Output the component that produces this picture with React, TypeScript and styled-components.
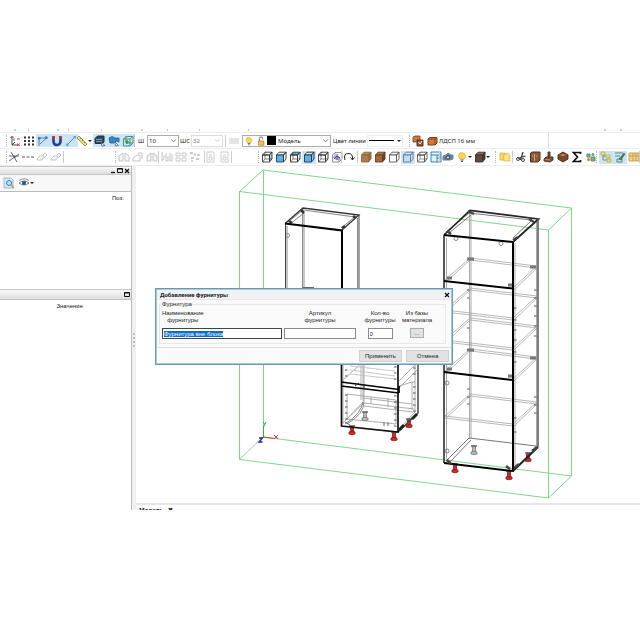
import React, { useEffect, useRef } from 'react';
import styled, { createGlobalStyle, css } from 'styled-components';

const Global = createGlobalStyle`
  * { box-sizing: border-box; }
  body { margin: 0; background: #fff; }
  body, button, input, select { font-family: "Liberation Sans", Roboto, sans-serif; font-size: 6px; line-height: 8px; color: #222; }
  button, input, select { margin: 0; padding: 0; }
  h2, p { margin: 0; }
`;

const Screen = styled.div`
  min-height: 100vh;
  display: grid;
  grid-template-rows: 129px 1fr 130px;
`;
const Workspace = styled.main`
  grid-row: 2;
  position: relative;
  min-width: 0;
  display: grid;
  grid-template-rows: 4px 16px 17px 1fr;
  overflow: hidden;
`;
const MenuEdge = styled.div`
  border-bottom: 1px solid #ececec;
  overflow: hidden;
  svg { display: block; width: 640px; height: 2px; }
`;
const Toolbar = styled.div`
  display: flex;
  align-items: center;
  min-width: 0;
  overflow: hidden;
  border-bottom: 1px solid #ededed;
`;
const Group = styled.div<{ $width: number; $left?: number }>`
  flex: none;
  width: ${p => p.$width}px;
  margin-left: ${p => p.$left ?? 0}px;
  display: flex;
  align-items: center;
  justify-content: space-between;
`;
const ToolButton = styled.button<{ $on?: boolean; $wide?: boolean }>`
  flex: none;
  width: ${p => (p.$wide ? 17 : 14)}px;
  height: 13px;
  border: 0;
  display: flex;
  align-items: center;
  justify-content: center;
  background: ${p => (p.$on ? '#cce4f7' : 'transparent')};
`;
const Glyph = styled.svg`
  flex: none;
  display: block;
  width: 12px;
  height: 12px;
  fill: none;
  stroke: #333;
`;
const Caret = styled.span`
  border: 2px solid transparent;
  border-top-color: #222;
  border-bottom: 0;
`;
const Divider = styled.span<{ $dotted?: boolean; $left?: number }>`
  flex: none;
  height: 12px;
  margin-left: ${p => p.$left ?? 0}px;
  border-left: 1px ${p => (p.$dotted ? 'dotted #bbb' : 'solid #ccc')};
`;
const FieldLabel = styled.label<{ $width: number; $left: number }>`
  flex: none;
  width: ${p => p.$width}px;
  margin-left: ${p => p.$left}px;
  font-family: "Noto Sans", sans-serif;
  white-space: nowrap;
`;
const LineLabel = styled.span`
  flex: none;
  width: 34px;
  margin-left: 2px;
  font-family: Roboto, sans-serif;
  white-space: nowrap;
`;
const Choice = styled.div<{ $width: number; $left: number; $faded?: boolean }>`
  flex: none;
  width: ${p => p.$width}px;
  height: 12px;
  margin-left: ${p => p.$left}px;
  display: flex;
  align-items: center;
  border: 1px solid ${p => (p.$faded ? '#ddd' : '#aaa')};
  color: ${p => (p.$faded ? '#777' : '#222')};
  select {
    flex: 1;
    min-width: 0;
    height: 100%;
    appearance: none;
    border: 0;
    padding-left: 1px;
    background: transparent;
    color: inherit;
    font-family: "Noto Sans", sans-serif;
  }
  > svg { height: 10px; }
  > svg:last-child { width: 7px; height: 7px; margin-right: 1px; }
`;
const Swatch = styled.span`
  width: 9px;
  height: 9px;
  margin-right: 1px;
  background: #000;
`;
const LineStyle = styled.button`
  flex: none;
  width: 36px;
  height: 12px;
  padding: 0 1px;
  display: flex;
  align-items: center;
  justify-content: space-between;
  border: 1px solid #eee;
  background: #fff;
  &::before { content: ""; width: 25px; border-top: 1px solid #000; }
`;
const Material = styled.span`
  margin-left: 1px;
  padding-right: 73px;
  border-right: 1px solid #e0e0e0;
  font-family: "Noto Sans", sans-serif;
  line-height: 16px;
  white-space: nowrap;
`;

const Body = styled.div`
  display: grid;
  grid-template-columns: 132px 4px minmax(0, 1fr);
  min-height: 0;
`;
const Side = styled.aside`
  display: grid;
  grid-template-rows: 9px 17px 97px 11px 1fr;
  min-height: 0;
  border-right: 1px solid #bbb;
`;
const PaneBar = styled.div`
  display: flex;
  justify-content: flex-end;
  align-items: center;
  gap: 1px;
  padding-right: 1px;
  border: solid #c5c5c5;
  border-width: 1px 0;
  background: linear-gradient(#f8f8f8, #dddddd);
`;
const WindowButton = styled.button`
  width: 6px;
  height: 7px;
  border: 0;
  background: transparent;
  svg { width: 6px; height: 7px; stroke: #111; }
`;
const PaneTools = styled.div`
  display: flex;
  align-items: center;
  gap: 1px;
  padding-left: 2px;
  background: #f8f8f8;
  border-bottom: 1px solid #bbb;
`;
const PaneHead = styled.div<{ $right: number }>`
  padding: 2px ${p => p.$right}px 0 0;
  text-align: right;
`;
const Splitter = styled.div`
  background: #f0f0f0;
  display: flex;
  justify-content: center;
  align-items: flex-start;
  padding-top: 167px;
  &::before { content: ""; height: 14px; border-left: 2px dotted #bbb; }
`;
const View = styled.section`
  display: flex;
  flex-direction: column;
  min-width: 0;
  min-height: 0;
`;
const Scene = styled.svg`
  flex: 1;
  min-height: 0;
  width: 100%;
  display: block;
  fill: none;
`;
const TabStrip = styled.div`
  flex: none;
  height: 7px;
  border-top: 2px solid #e6e6e6;
  padding: 1px 0 0 3px;
  overflow: hidden;
  font-weight: 700;
  font-family: "Noto Sans", sans-serif;
  display: flex;
  gap: 5px;
`;

const Dialog = styled.form`
  position: absolute;
  left: 155px;
  top: 159px;
  width: 298px;
  height: 77px;
  display: grid;
  grid-template-rows: 11px 1fr 17px;
  border: 1px solid #6b99b1;
  outline: 1px solid #a9c9d8;
  outline-offset: -2px;
  background: #fafafa;
`;
const DialogTitle = styled.header`
  display: flex;
  justify-content: space-between;
  align-items: center;
  padding: 1px 2px 0 4px;
  background: #f0f2f5;
  border-bottom: 1px solid #e3e5e8;
  h2 { font: 700 6px/8px Roboto, sans-serif; }
`;
const Fields = styled.fieldset`
  min-width: 0;
  margin: 0 6px 3px 3px;
  padding: 0 0 0 2px;
  border: 1px solid #e8e8e8;
  display: grid;
  grid-template-columns: 120px 72px 44px 26px;
  column-gap: 2px;
  align-content: start;
  legend { padding: 0 1px; margin-left: -1px; }
`;
const fieldText = css`
  line-height: 7px;
  white-space: pre;
  text-align: center;
`;
const Field = styled.div<{ $start?: boolean }>`
  min-width: 0;
  display: flex;
  flex-direction: column;
  align-items: ${p => (p.$start ? 'flex-start' : 'center')};
  gap: 4px;
  padding-top: 2px;
  label { ${fieldText} }
`;
const TextBox = styled.input<{ $short?: boolean; $dark?: boolean }>`
  width: ${p => (p.$short ? '25px' : '100%')};
  height: 11px;
  border: 1px solid ${p => (p.$dark ? '#444' : '#8a8a8a')};
  padding: 0 1px;
  background: #fff;
  outline: none;
  caret-color: transparent;
  &::selection { background: #0a6fc8; color: #fff; }
`;
const PushButton = styled.button<{ $small?: boolean }>`
  width: ${p => (p.$small ? 14 : 43)}px;
  height: ${p => (p.$small ? 10 : 12)}px;
  border: 1px solid ${p => (p.$small ? '#aaa' : '#d0d0d0')};
  background: #e2e2e2;
`;
const Actions = styled.footer`
  display: flex;
  justify-content: flex-end;
  align-items: center;
  gap: 4px;
  padding-right: 3px;
  border-top: 1px solid #ddd;
`;

type IconProps = { children: React.ReactNode };
const Icon = ({ children }: IconProps) => <Glyph viewBox="0 0 12 12" aria-hidden="true">{children}</Glyph>;

const Cube = ({ front = 'none', top = 'none', side = 'none', back = false, stroke = '#333' }) => (
  <Icon>
    <g stroke={stroke} strokeWidth="0.9" strokeLinejoin="round">
      <path d="M1.5 4 4 1.2H11L8.500 4Z" fill={top} />
      <path d="M8.500 4 11 1.2V8L8.500 11Z" fill={side} />
      <path d="M1.500 4H8.500V11H1.500Z" fill={front} />
      {back && <path d="M4 1.200V8H11M4 8 1.500 11" strokeWidth=".6" />}
    </g>
  </Icon>
);

const Axes = () => <Icon><path d="M3 2V10H9M3 10 6 7" stroke="#444" /><path d="M1.500 3 3 1 4.500 3M8 4H11M8 8.500 11 11M11 8.500 8 11" stroke="#c44" /><path d="M5 3V6" stroke="#3a5" /></Icon>;
const GridDots = () => <Icon><path d="M1 2.500H11M1 6H11M1 9.500H11" stroke="#333" strokeWidth="2" strokeDasharray="2 2" /></Icon>;
const Polyline = () => <Icon><path d="M2 11V3H9.500L3 9" stroke="#5b83a8" /><path d="M1 2H3.500V4.500H1ZM8 1.500H10.500V4H8Z" fill="#417da8" stroke="none" /></Icon>;
const Magnet = () => <Icon><path d="M2.500 1.500V6Q2.500 10 6 10T9.500 6V1.500" stroke="#293b90" strokeWidth="2.600" /><path d="M2.500 1V4M9.500 1V4" stroke="#c33338" strokeWidth="2.600" /></Icon>;
const Segment = () => <Icon><path d="M2 10 10 2" stroke="#4f86c3" /><path d="M1 8.500H3.500V11H1ZM8.500 1H11V3.500H8.500Z" fill="#63a4e8" stroke="none" /></Icon>;
const Ruler = () => <Icon><path d="M1 3 3 1 11 9 9 11Z" fill="#eadf75" stroke="#89803a" strokeWidth=".8" /><path d="M4 4 5 3M6 6 7 5M8 8 9 7" stroke="#766e2d" strokeWidth=".7" /></Icon>;
const Layers = () => <Icon><path d="M1 3.500 3.500 1H10V7L8 8.500H1Z" fill="#31485a" stroke="#1f303d" /><path d="M2 4.500H8M2 6.500H8" stroke="#8ab4d0" strokeWidth=".8" /><path d="M7 7 11 10.500 8 11Z" fill="#fff" stroke="#345" strokeWidth=".7" /></Icon>;
const Camera = () => <Icon><path d="M1 3 4 1.500 7 3H11V7L8 6 6 8H2Z" fill="#3489c9" stroke="#225f8d" strokeWidth=".8" /><path d="M7 7 10.500 10.500 7.500 11Z" fill="#fff" stroke="#456" strokeWidth=".7" /></Icon>;
const GreenFrame = () => <Icon><path d="M1.500 4 4 1.500H11V8L8 11H1.500ZM1.500 4H8V11M8 4 11 1.500M4 1.500V8H11" stroke="#3a8f66" strokeWidth=".9" /><path d="M5 5V9M3.500 7H7" stroke="#257b42" /></Icon>;
const Bulb = () => <Icon><path d="M4 8Q1.500 5.500 3 3T8 2.500T8 8Z" fill="#ffd750" stroke="#d8a92f" strokeWidth=".7" /><path d="M4.500 9H7.500M5 10.500H7" stroke="#555" /></Icon>;
const Lock = () => <Icon><path d="M4 6V3Q4 1 6 1T8 3V4" stroke="#555" /><path d="M3 6H9.500V11H3Z" fill="#f5c44a" stroke="#9d7727" strokeWidth=".8" /></Icon>;
const Chevron = ({ faded = false }) => <Icon><path d="M2 4 6 8 10 4" stroke={faded ? '#bbb' : '#555'} strokeWidth="1.300" /></Icon>;
const Star = () => <Icon><path d="M1 10 11 3M3 1 9 11M1 5H11" stroke="#444" strokeWidth=".8" /><path d="M5.500 5H7.500V7H5.500Z" fill="#416da0" stroke="none" /></Icon>;
const Dash = () => <Icon><path d="M0 6H12" stroke="#555" strokeDasharray="3 1.500" /></Icon>;
const Eraser = () => <Icon><path d="M1 8 4 5H8L6 9H1ZM7 4 9 2 11 4 8 7" stroke="#bcbcbc" strokeWidth=".9" /></Icon>;
const Mirror = () => <Icon><path d="M1 10V5L5 2V10ZM7 10V2L11 5V10Z" stroke="#c0c0c0" fill="#f5f5f5" strokeWidth=".9" /></Icon>;
const Sheet = () => <Icon><path d="M1 10V7L5 4H8V10ZM6 2H10V8" stroke="#bcbcbc" strokeWidth=".9" /></Icon>;
const Tiles = () => <Icon><path d="M1 2H5V5H1ZM7 2H11V5H7ZM1 7H5V10H1ZM7 7H11V10H7Z" stroke="#c2c2c2" strokeWidth=".9" /></Icon>;
const Scatter = () => <Icon><path d="M1 2H4M6 2V5M8 4H11M2 7H5M7 8H10M3 9V11" stroke="#bbb" strokeWidth="1.300" /></Icon>;
const Bars = () => <Icon><path d="M1 1V10L3 8V4M5 2V10H7V5M9 2V10H11V3" stroke="#bdbdbd" strokeWidth=".9" /></Icon>;
const Page = () => <Icon><path d="M2 1H9V11H2ZM4 4H7M4 6H7V9H4Z" stroke="#c7c7c7" strokeWidth=".9" /></Icon>;
const Rotate = () => <Icon><path d="M2 9Q0 2 6 2.500 10 3 9.500 8M7.500 6.500 9.500 9 11.500 6.500" stroke="#222" /></Icon>;
const Globe = () => <Icon><path d="M1.500 4 4 1.500H11V8L8 11H1.500ZM4 1.500V8H11M1.500 6H8V11" stroke="#777" strokeWidth=".8" /><path d="M3 8 6 5 9 7M6 3V9" stroke="#5b34c7" /></Icon>;
const Panels = () => <Icon><path d="M1 1H11V11H1ZM1 4H11M7 4V11M7 7H11" stroke="#3983bb" fill="#e1f3ff" /></Icon>;
const Photo = () => <Icon><path d="M1 9V5L4 4 6 2 9 4H11V8L8 9Z" fill="#718096" stroke="#7284a0" /><circle cx="6" cy="6.500" r="1.700" fill="#c6dced" stroke="#2b3a50" /></Icon>;
const Notes = () => <Icon><path d="M1 2H6V9H1Z" fill="#ffd95e" stroke="#c49d38" strokeWidth=".6" /><path d="M4 4 9 2 11 5V10H5Z" fill="#ffe478" stroke="#cfaa42" strokeWidth=".6" /></Icon>;
const Scissors = () => <Icon><path d="M8 1 5.500 9M10.500 5 3 7.500" stroke="#333" strokeWidth="1.200" /><circle cx="3" cy="8" r="1.500" stroke="#444" /><circle cx="8" cy="9" r="1.500" stroke="#444" /></Icon>;
const Cabinet = () => <Icon><path d="M1.500 2 3.500 1H11V9L9 11H1.500Z" fill="#8b5a3b" stroke="#4d3225" /><path d="M5.500 3V10M3 5H4M7 5H8" stroke="#d4a56e" /></Icon>;
const Drill = () => <Icon><path d="M5 1H7V6H5ZM1 8 3 6H10V9L7 11 1 10Z" fill="#79523d" stroke="#4d3931" /><path d="M2 8.500 7 9" stroke="#d3866d" /></Icon>;
const Crate = () => <Icon><path d="M1 4 6 1 11 4V8L6 11 1 8Z" fill="#7b4a2e" stroke="#4e2d1c" /><path d="M2 4 6 3 9 4 6 5Z" fill="#d19252" stroke="none" /></Icon>;
const Sigma = () => <Icon><path d="M9.500 3V1.500H2.500L6.500 6 2.500 10.500H9.500V9" stroke="#111" strokeWidth="1.700" /></Icon>;
const Money = () => <Icon><path d="M2 3H5V6H2ZM6 6H10V10H6Z" fill="#7eb46d" stroke="#668d64" /><circle cx="8" cy="3.500" r="1.500" fill="#5b9bd0" stroke="none" /><circle cx="3.500" cy="8.500" r="1.500" fill="#d27c45" stroke="none" /></Icon>;
const Tree = () => <Icon><path d="M3 4V9H8M3 5H6" stroke="#7c8c73" /><path d="M1 1H5V4H1ZM6 4H10V7H6ZM7 8H11V11H7Z" fill="#efdb69" stroke="#aaa04c" strokeWidth=".6" /></Icon>;
const Edit = () => <Icon><path d="M1 2H9M1 5H6M3 8H8V11H3Z" stroke="#568769" /><path d="M5 8 10 2 11 3 7 9Z" fill="#477f4f" stroke="#326a39" strokeWidth=".6" /></Icon>;
const Table = () => <Icon><path d="M1 2H11V10H1ZM1 5H11M5 2V10M8 2V10" fill="#f5d681" stroke="#bf9b50" strokeWidth=".9" /></Icon>;
const Search = () => <Icon><path d="M1 1H8L10 3V11H1Z" fill="#d9ecfa" stroke="#79a1bd" strokeWidth=".7" /><circle cx="6" cy="6" r="2.500" fill="#bfe2f5" stroke="#3d7ba8" /><path d="M8 8 11 11" stroke="#c09648" strokeWidth="1.300" /></Icon>;
const Eye = () => <Icon><path d="M1 6Q6 2 11 6 6 10 1 6Z" fill="#e8eef2" stroke="#71818b" /><circle cx="6" cy="6" r="2" fill="#2e5875" stroke="none" /><path d="M1 3.500Q6 0 11 3.500" stroke="#8194a0" /></Icon>;
const Boxes = () => <Icon><path d="M1 2 3 1H8V7H1Z" fill="#d47936" stroke="#6c3e24" strokeWidth=".8" /><path d="M5 5H11V11H5Z" fill="#99532f" stroke="#53321f" /><path d="M6.500 7 8 9 10 6" stroke="#eee" /></Icon>;
const Slab = () => <Icon><path d="M2 4 4 2.500H11V8L9 10H2Z" fill="#d77831" stroke="#724020" /><path d="M2 4H9V10M9 4 11 2.500" stroke="#724020" strokeWidth=".7" /></Icon>;
const Lines = () => <Icon><path d="M1 4H11M1 6H11M1 8H11" stroke="#ccc" /></Icon>;
const Cross = () => <Glyph viewBox="0 0 6 6"><path d="M1 1.500 5 5.500M5 1.500 1 5.500" strokeWidth="1.300" /></Glyph>;
const Maximize = () => <Glyph viewBox="0 0 6 7"><path d="M.5 1.500H5.500V5.500H.5ZM.5 2H5.500" /></Glyph>;

type Tool = { label: string; icon: React.ReactNode; on?: boolean; caret?: boolean };
const tool = (label: string, icon: React.ReactNode, on = false, caret = false): Tool => ({ label, icon, on, caret });
const Tools = ({ items, width, left }: { items: Tool[]; width: number; left?: number }) => (
  <Group $width={width} $left={left}>
    {items.map(t => (
      <ToolButton key={t.label} type="button" aria-label={t.label} $on={t.on} $wide={t.caret}>
        {t.icon}{t.caret && <Caret />}
      </ToolButton>
    ))}
  </Group>
);

const BLUE = '#54b4ef';
const snapTools = [tool('Оси', <Axes />), tool('Сетка', <GridDots />), tool('Ломаная', <Polyline />, true), tool('Привязка', <Magnet />, true), tool('Отрезок', <Segment />, true)];
const modeTools = [tool('Слои', <Layers />, true), tool('Камера', <Camera />, true), tool('Каркас', <GreenFrame />, true)];
const viewTools = [
  tool('Слева', <Cube side="#9dd3f5" back />), tool('Спереди', <Cube front={BLUE} />), tool('Сверху', <Cube top={BLUE} back />),
  tool('Вид', <Cube front={BLUE} side="#80c9f3" />, true), tool('Снизу', <Cube back />), tool('Орбита', <Globe />),
];
const shadeTools = [
  tool('Текстура', <Cube front="#ad7c48" top="#b98a54" side="#9a6d3d" stroke="#8b6440" />),
  tool('Материал', <Cube front="#a6663a" top="#b77b4d" side="#6c4229" stroke="#60402b" />),
  tool('Без граней', <Cube front="#fff" stroke="#555" />),
  tool('С гранями', <Cube front="#c5dcef" top="#d9eafa" stroke="#567b9d" />, true),
  tool('Проволочный', <Cube back stroke="#555" />), tool('Панели', <Panels />),
];
const modelTools = [tool('Вырезать', <Scissors />), tool('Шкаф', <Cabinet />), tool('Крепёж', <Drill />), tool('Ящик', <Crate />), tool('Сумма', <Sigma />), tool('Стоимость', <Money />)];

const Leg = ({ x, y, color = '#c92d2d', line = '#8a1515' }: { x: number; y: number; color?: string; line?: string }) => (
  <g stroke={line} strokeWidth=".8" fill={color}>
    <path d={`M${x - 1.5} ${y - 6}h3v6h-3z`} />
    <path d={`M${x - 3} ${y}q3-1.500 6 0v2q-3 1.500-6 0z`} />
    <path d={`M${x - 3} ${y - 6}h6`} stroke="#666" strokeWidth="1.500" />
  </g>
);
const Shelf = ({ y, open = false }: { y: number; open?: boolean }) => (
  <g stroke="#999" strokeWidth=".7">
    <path d={`M445 ${y}L470 ${y - 22}L537 ${y - 14}L513 ${y + 8}M446 ${y + 2}L470 ${y - 20}L537 ${y - 12}L514 ${y + 10}`} />
    {!open && <path d={`M445 ${y}L513 ${y + 8}M445 ${y + 2}L513 ${y + 10}`} />}
    {open && <path d={`M467 ${y - 21}h7M530 ${y - 13}h6M447 ${y - 2}h5M508 ${y + 5}h4`} stroke="#777" strokeWidth="3" />}
  </g>
);
const Pegs = ({ x, rows }: { x: number; rows: number[] }) => (
  <path d={rows.map(y => `M${x} ${y}h2.500`).join('')} stroke="#555" />
);

const Model = () => (
  <Scene viewBox="136 166 504 337" preserveAspectRatio="xMinYMin meet" role="img" aria-label="Модель">
    <g stroke="#82d68c" strokeWidth="1">
      <path d="M263.500 170V437M239.500 191V459.500M548.500 230V498M571.500 208V476" />
      <path d="M263 170 571.500 208M239.500 191.500 548.500 230M239.500 459.500 548.500 498M263 437 571.500 476M239.500 191.500 263 170M548.500 230 571.500 208M548.500 498 571.500 476" />
      <path d="M239.500 459.500 263 437" stroke="#a8c9aa" />
    </g>
    <g strokeWidth="1">
      <path d="M263.500 437V426M263.500 427 266 422M264.500 424 263 422" stroke="#39a84a" />
      <path d="M263 437 274 438.500M274 435 278 439M278 435 274 439" stroke="#d33f36" />
      <path d="M259 438H262.500L259 442H262.500" stroke="#192a9b" strokeWidth="1.300" />
    </g>

    <g stroke="#8c8c8c" strokeWidth="1">
      <path d="M302.500 209V290M304 212V290M287 226V290M357.500 218V290" />
      <path d="M303 287.500H314" stroke="#666" />
      <circle cx="287.500" cy="235.500" r="2" />
    </g>
    <path d="M288 222 303 210 355 217 341 228M290 224 304 213" stroke="#888" />
    <path d="M285.500 224V290M359 215V290" stroke="#444" />
    <path d="M285 223.500 303 208 359 215 342 230" stroke="#333" strokeWidth="1.300" />
    <path d="M285 223.500 342 230.500V290" stroke="#000" strokeWidth="2" />
    <path d="M289 221 292 223M301 210 304 213M353 216 356 218M342 228 345 226" stroke="#333" strokeWidth="2.500" />

    <g stroke="#999" strokeWidth=".8">
      <path d="M363 360V402L343 423M361 364V400M364 365V402M343 380 365 360M399 381 417 363M399 388 417 370" />
      <path d="M347 394 396 400V424L347 419ZM364 403 414 409M364 406 413 412M347 419 364 403M399 429 416 411M363 398 412 404" />
      <path d="M343 362V424M415 360V412M412 382V410M399 386 412 382H415M371 397V404M388 398V407" />
      <path d="M350 366 395 371M350 370 395 376M350 374 395 379" stroke="#bbb" />
    </g>
    <path d="M345 424Q361 414 363 402M347 424Q364 414 364 402" stroke="#888" />
    <Leg x={365} y={418} color="#bbb" line="#777" />
    <Leg x={352} y={432} /><Leg x={394} y={438} /><Leg x={409} y={425} />
    <path d="M418 360V413L398 432" stroke="#444" strokeWidth="1.500" />
    <path d="M341.500 360V426L398 432V360" stroke="#111" strokeWidth="1.700" />
    <path d="M341 382 399 389.500M341 386 399 393M399 386V393" stroke="#000" strokeWidth="1.700" />
    <path d="M355 386 359 383M364 384V389" stroke="#333" />
    <Pegs x={345} rows={[370, 376, 395, 401, 407, 413, 419]} />
    <Pegs x={394} rows={[367, 373, 379, 396, 402, 408, 414, 420, 426]} />
    <Pegs x={413} rows={[368, 374, 387, 393, 399, 405, 411]} />
    <path d="M399 430 404 425M412 419 417 414" stroke="#222" strokeWidth="3" />
    <path d="M384 422V426M388 422V426M345 422 350 425" stroke="#666" />

    <path d="M469.500 212V439M471 214V439M446.500 238V461M536.500 222V447M515 243V468" stroke="#aaa" />
    <Shelf y={280} open /><Shelf y={310} /><Shelf y={340} /><Shelf y={371} open /><Shelf y={416} />
    <path d="M446 461 469 438 536 446M450 462 471 440" stroke="#777" />
    <path d="M446 232 469 213 532 220 513 238M449 233 471 215" stroke="#777" />
    <g stroke="#888">
      <circle cx="456" cy="238.500" r="2" /><circle cx="501" cy="243.500" r="2" />
      <circle cx="447" cy="383" r="2" /><circle cx="447" cy="451" r="2" />
    </g>
    <Pegs x={514} rows={[308, 320, 330, 340, 352, 362, 418, 432]} />
    <Pegs x={534} rows={[290, 298, 306, 316, 326, 336, 397, 405, 413]} />
    <Pegs x={467} rows={[290, 298, 328, 389, 397, 404]} />
    <Leg x={474} y={452} color="#bbb" line="#777" />
    <Leg x={455} y={470} /><Leg x={509} y={477} /><Leg x={528} y={459} />
    <path d="M444 235 470 210.500 538.500 219 513 242" stroke="#222" strokeWidth="1.700" />
    <path d="M538 219V447" stroke="#555" strokeWidth="1.500" />
    <path d="M444 235V463" stroke="#222" strokeWidth="1.500" />
    <path d="M444 235 513 242M444 281 513 288.500M444 372 513 380M444 463 513 471V242" stroke="#000" strokeWidth="2" />
    <path d="M513 471 538 447" stroke="#222" strokeWidth="2" />
    <path d="M447 231 451 234M468 211 474 214M529 219 534 222M513 240 518 237M514 468 519 464M532 451 537 447M447 460 451 464M506 466 510 469" stroke="#444" strokeWidth="2.500" />
  </Scene>
);

export default function App() {
  const nameRef = useRef<HTMLInputElement>(null);
  useEffect(() => {
    nameRef.current?.focus();
    nameRef.current?.select();
  }, []);
  return (
    <>
      <Global />
      <Screen>
        <Workspace>
          <MenuEdge>
            <svg viewBox="0 0 640 2" aria-hidden="true">
              <path d="M14 1h2M28 1h1M57 1h2M68 1h1M101 1h1M141 1h2M167 1h1M199 1h1M248 1h1M604 1h2M620 1h2" stroke="#999" />
            </svg>
          </MenuEdge>
          <Toolbar role="toolbar" aria-label="Привязки и слои">
            <Divider $dotted $left={6} />
            <Tools items={snapTools} width={66} left={1} />
            <Tools items={[tool('Линейка', <Ruler />, false, true)]} width={17} left={1} />
            <Tools items={modeTools} width={41} left={1} />
            <Divider $dotted />
            <FieldLabel htmlFor="w" $width={8} $left={3}>Ш</FieldLabel>
            <Choice $width={32} $left={1}><select id="w"><option>10</option></select><Chevron /></Choice>
            <FieldLabel htmlFor="ws" $width={11} $left={1}>ШС</FieldLabel>
            <Choice $width={32} $left={0} $faded><select id="ws"><option>32</option></select><Chevron faded /></Choice>
            <Divider $left={2} />
            <Tools items={[tool('Слой', <Lines />)]} width={14} left={1} />
            <Choice $width={89} $left={1}>
              <Bulb /><Lock /><Swatch />
              <select aria-label="Слой модели"><option>Модель</option></select><Chevron />
            </Choice>
            <LineLabel>Цвет линии</LineLabel>
            <LineStyle type="button" aria-label="Цвет линии"><Caret /></LineStyle>
            <Divider $dotted $left={6} />
            <Tools items={[tool('Материалы', <Boxes />), tool('Плита', <Slab />)]} width={27} left={1} />
            <Material>ЛДСП 16 мм</Material>
          </Toolbar>
          <Toolbar role="toolbar" aria-label="Виды и модель">
            <Divider $dotted $left={6} />
            <Tools items={[tool('Точка', <Star />), tool('Штрих', <Dash />), tool('Ластик', <Eraser />), tool('Стереть', <Eraser />)]} width={56} left={0} />
            <Divider />
            <Divider $dotted $left={51} />
            <Tools items={[tool('Зеркало', <Mirror />), tool('Лист', <Sheet />), tool('Копия', <Mirror />)]} width={41} left={1} />
            <Divider />
            <Tools items={[tool('Ряд', <Bars />), tool('Массив', <Tiles />), tool('Россыпь', <Scatter />)]} width={41} left={1} />
            <Divider $left={3} />
            <Tools items={[tool('Страница', <Page />), tool('Документ', <Page />)]} width={27} left={-1} />
            <Divider />
            <Divider $dotted $left={26} />
            <Tools items={viewTools} width={80} left={1} />
            <Divider $left={1} />
            <Tools items={[tool('Повернуть', <Rotate />)]} width={14} left={0} />
            <Divider $left={1} />
            <Tools items={shadeTools} width={80} left={1} />
            <Divider />
            <Tools items={[tool('Снимок', <Photo />)]} width={14} left={1} />
            <Tools items={[tool('Свет', <Bulb />, false, true), tool('Короб', <Cube front="#68483b" top="#936d54" side="#503a31" />, false, true)]} width={35} left={0} />
            <Divider $dotted $left={5} />
            <Tools items={[tool('Заметки', <Notes />)]} width={14} left={2} />
            <Divider />
            <Tools items={modelTools} width={81} left={1} />
            <Divider $dotted $left={1} />
            <Tools items={[tool('Дерево', <Tree />, true), tool('Правка', <Edit />, true), tool('Таблица', <Table />)]} width={40} left={2} />
            <Divider />
          </Toolbar>

          <Body>
            <Side>
              <PaneBar>
                <WindowButton type="button" aria-label="Свернуть"><Glyph viewBox="0 0 6 7"><path d="M1 5.500H5" strokeWidth="1.300" /></Glyph></WindowButton>
                <WindowButton type="button" aria-label="Развернуть"><Maximize /></WindowButton>
                <WindowButton type="button" aria-label="Закрыть"><Cross /></WindowButton>
              </PaneBar>
              <PaneTools>
                <ToolButton type="button" aria-label="Поиск"><Search /></ToolButton>
                <ToolButton type="button" $wide aria-label="Видимость"><Eye /><Caret /></ToolButton>
              </PaneTools>
              <PaneHead $right={7}>Поз.</PaneHead>
              <PaneBar>
                <WindowButton type="button" aria-label="Развернуть свойства"><Maximize /></WindowButton>
              </PaneBar>
              <PaneHead $right={48}>Значение</PaneHead>
            </Side>
            <Splitter />
            <View>
              <Model />
              <TabStrip><span>Модель</span><span>✖</span></TabStrip>
            </View>
          </Body>

          <Dialog role="dialog" aria-labelledby="dlg" onSubmit={e => e.preventDefault()}>
            <DialogTitle>
              <h2 id="dlg">Добавление фурнитуры</h2>
              <WindowButton type="button" aria-label="Закрыть окно"><Cross /></WindowButton>
            </DialogTitle>
            <Fields>
              <legend>Фурнитура</legend>
              <Field $start>
                <label htmlFor="name">{'Наименование\nфурнитуры'}</label>
                <TextBox id="name" ref={nameRef} $dark defaultValue="Фурнитура вне блока" />
              </Field>
              <Field>
                <label htmlFor="art">{'Артикул\nфурнитуры'}</label>
                <TextBox id="art" />
              </Field>
              <Field>
                <label htmlFor="qty">{'Кол-во\nфурнитуры'}</label>
                <TextBox id="qty" $short defaultValue="0" />
              </Field>
              <Field>
                <label htmlFor="base">{'Из базы\nматериала'}</label>
                <PushButton id="base" type="button" $small>...</PushButton>
              </Field>
            </Fields>
            <Actions>
              <PushButton type="submit">Применить</PushButton>
              <PushButton type="button">Отмена</PushButton>
            </Actions>
          </Dialog>
        </Workspace>
      </Screen>
    </>
  );
}
